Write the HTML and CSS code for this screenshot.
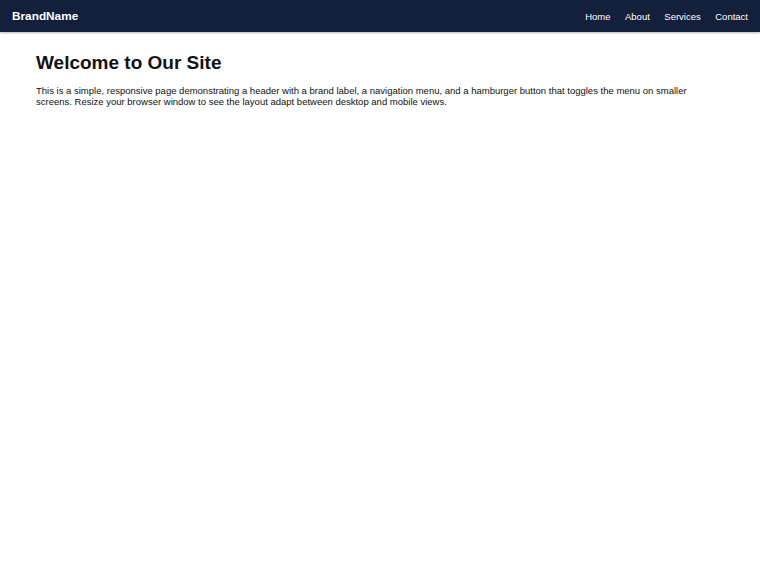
FILE: index.html
```html
<!DOCTYPE html>
<html lang="en">
<head>
  <meta charset="UTF-8">
  <meta name="viewport" content="width=device-width, initial-scale=1.0">
  <title>Responsive Header</title>
  <link rel="stylesheet" href="styles.css">
</head>
<body>
<header class="site-header">
  <div class="brand">BrandName</div>
  <nav class="nav-menu">
    <a href="#">Home</a>
    <a href="#">About</a>
    <a href="#">Services</a>
    <a href="#">Contact</a>
  </nav>
</header>

<main class="content">
  <h1>Welcome to Our Site</h1>
  <p>This is a simple, responsive page demonstrating a header with a brand label, a navigation menu, and a hamburger button that toggles the menu on smaller screens. Resize your browser window to see the layout adapt between desktop and mobile views.</p>
</main>
</body>
</html>
```

FILE: styles.css
```css
body {
  margin: 0;
  font-family: "Liberation Sans", Arial, sans-serif;
  color: #111;
  background-color: #ffffff;
}

.site-header {
  background-color: #131f3b;
  color: white;
  height: 32px;
  padding: 0 12px;
  display: flex;
  justify-content: space-between;
  align-items: center;
  box-shadow: 0 1px 2px rgba(0, 0, 0, 0.3);
}

.brand {
  font-size: 11.8px;
  font-weight: bold;
}

.nav-menu {
  display: flex;
  gap: 14.5px;
}

.nav-menu a {
  color: white;
  text-decoration: none;
  font-size: 9.5px;
}

.content {
  padding: 20px 36px;
}

.content h1 {
  font-size: 19px;
  margin: 0 0 11px;
}

.content p {
  font-size: 9.5px;
  line-height: 11px;
  margin: 0;
}
```
